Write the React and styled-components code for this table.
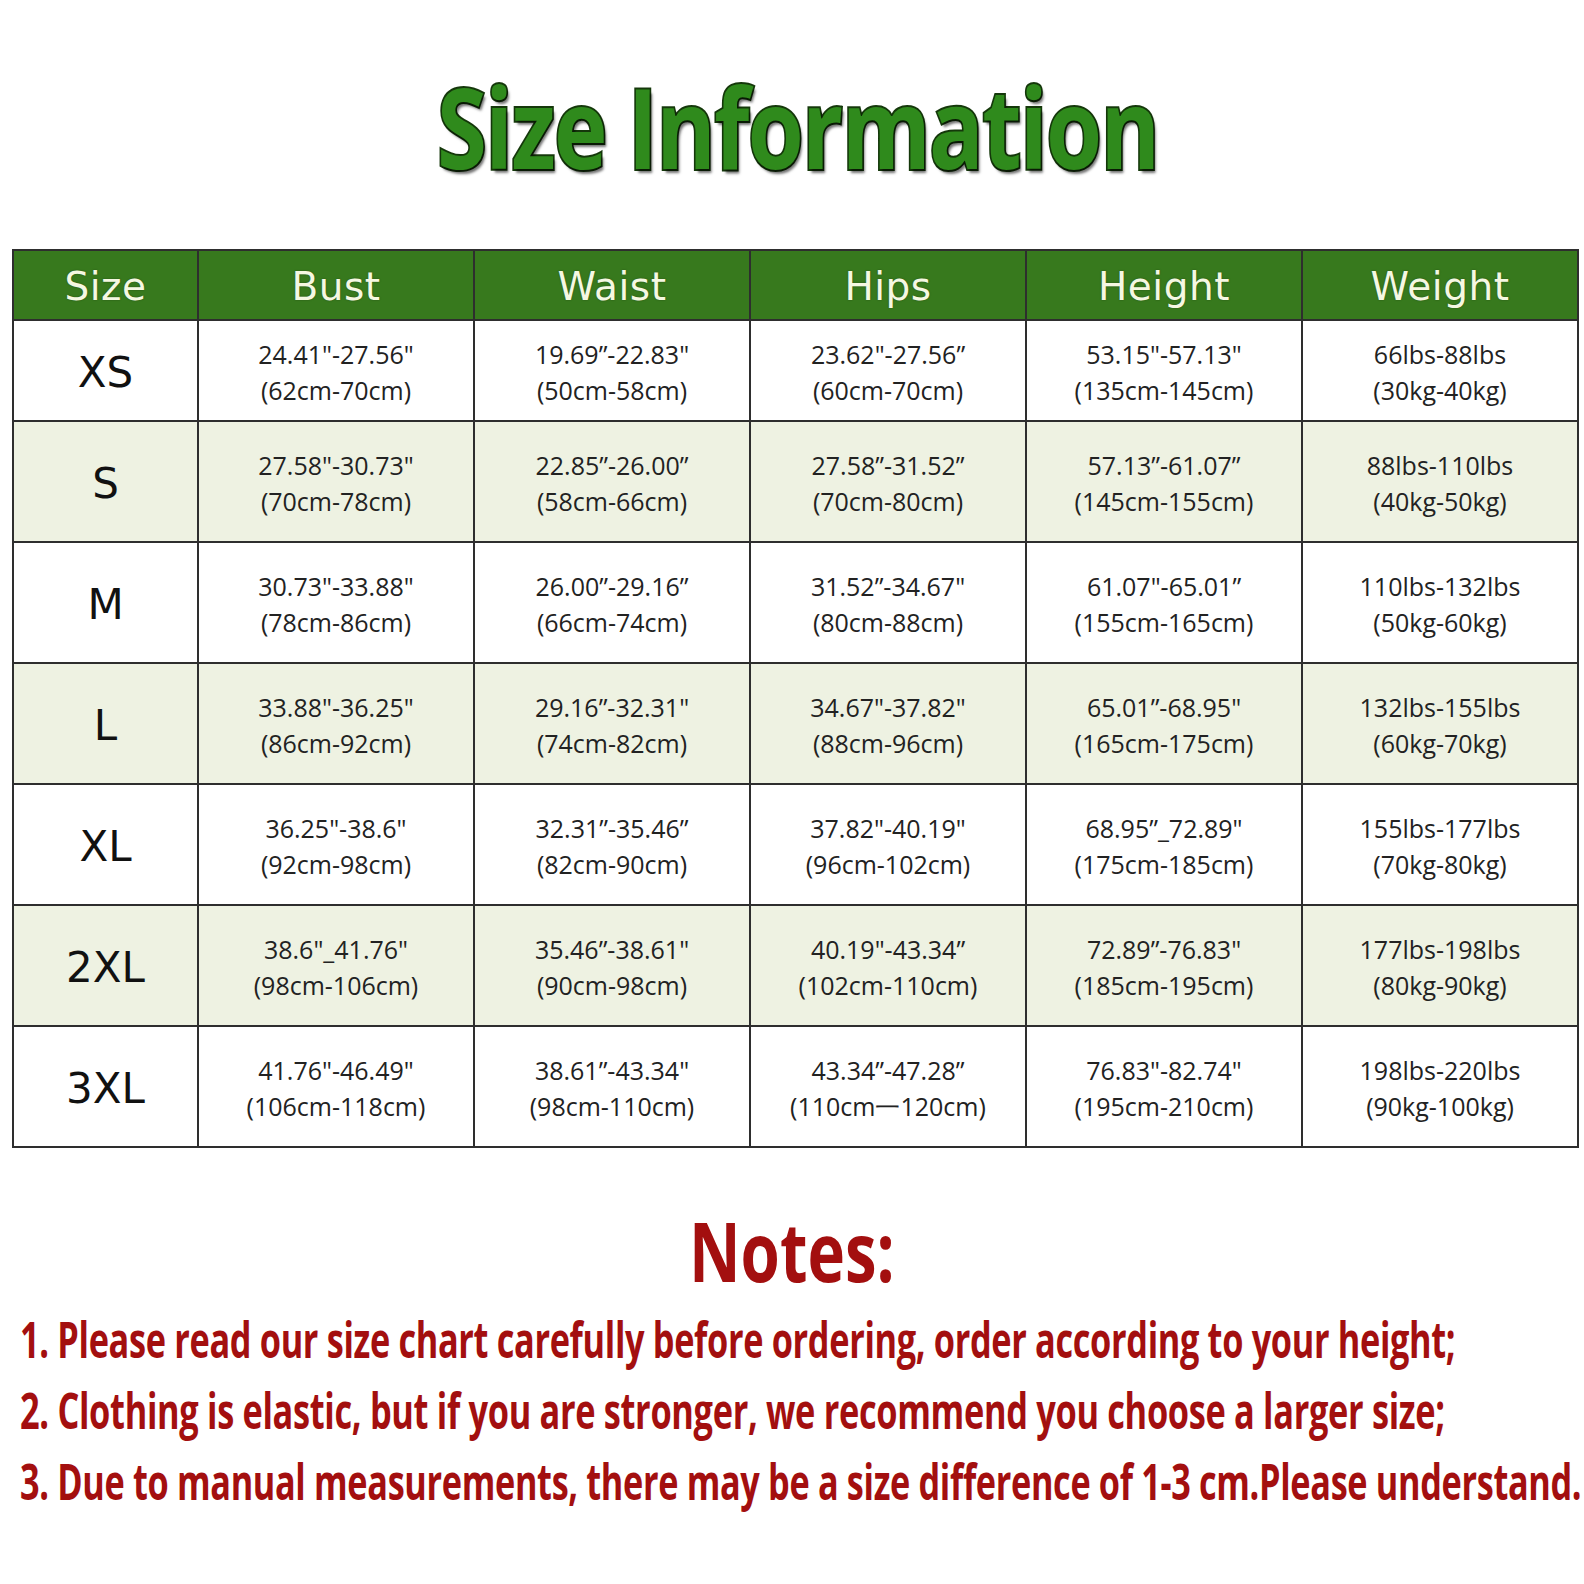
import React, { useLayoutEffect, useRef, useState } from "react";
import styled, { createGlobalStyle } from "styled-components";

const GlobalStyle = createGlobalStyle`
  html, body {
    margin: 0;
    padding: 0;
    background: #ffffff;
    overflow: hidden;
  }
`;

const Page = styled.div`
  width: 100%;
  height: 100vh;
  background: #ffffff;
  display: flex;
  flex-direction: column;
  overflow: hidden;
`;

const Title = styled.h1`
  margin: 66px 0 0 0;
  padding-left: 11px;
  height: 130px;
  text-align: center;
  font-family: "Open Sans", sans-serif;
  font-weight: 700;
  font-size: 112px;
  line-height: 120px;
  letter-spacing: -2px;
  color: #2f8a1c;
  -webkit-text-stroke: 4px #15380b;
  paint-order: stroke fill;
  text-shadow: 3px 4px 3px rgba(0, 0, 0, 0.55);
`;

const Squeeze = styled.span`
  display: inline-block;
  white-space: nowrap;
  transform-origin: ${(p) => p.$origin || "center"};
`;

const Grid = styled.div`
  margin: 53px 0 0 12px;
  width: 1567px;
  box-sizing: border-box;
  display: grid;
  grid-template-columns: 183px repeat(5, 274px);
  grid-template-rows: 68px 99px repeat(6, 119px);
  gap: 2px;
  padding: 2px;
  background: #2e2e2e;
  font-family: "Open Sans", "DejaVu Sans", sans-serif;
`;

const HeadCell = styled.div`
  background: #37791d;
  display: flex;
  align-items: center;
  justify-content: center;
  color: #f5f8e2;
  font-family: "DejaVu Sans", sans-serif;
  font-size: 39px;
  letter-spacing: 0.5px;
  text-shadow: 0 0 2px rgba(0, 0, 0, 0.35);
  padding-top: 2px;
`;

const SizeCell = styled.div`
  background: ${(p) => (p.$alt ? "#eef2e2" : "#ffffff")};
  display: flex;
  align-items: center;
  justify-content: center;
  font-family: "DejaVu Sans", sans-serif;
  font-size: 42px;
  color: #111111;
  padding-top: 4px;
`;

const DataCell = styled.div`
  background: ${(p) => (p.$alt ? "#eef2e2" : "#ffffff")};
  display: flex;
  flex-direction: column;
  align-items: center;
  justify-content: center;
  font-size: 25px;
  line-height: 36px;
  color: #222222;
  padding-top: 2px;
`;

const Line = styled.div`
  white-space: nowrap;
`;

const NotesTitle = styled.h2`
  margin: 57px 0 0 0;
  text-align: center;
  font-family: "Open Sans", sans-serif;
  font-weight: 700;
  font-size: 82px;
  line-height: 90px;
  color: #a30f0f;
`;

const NotesList = styled.div`
  margin-top: 8px;
  padding-left: 20px;
  display: flex;
  flex-direction: column;
`;

const Note = styled.div`
  font-family: "Open Sans", sans-serif;
  font-weight: 700;
  font-size: 51px;
  line-height: 71px;
  letter-spacing: -0.5px;
  color: #a30f0f;
  white-space: nowrap;
`;

// squeezes a line horizontally so it takes the width it has in the picture
function Fit({ width, origin, children }) {
  const ref = useRef(null);
  const [scale, setScale] = useState(1);
  useLayoutEffect(() => {
    if (ref.current) {
      const w = ref.current.offsetWidth;
      if (w > 0) setScale(width / w);
    }
  }, [width, children]);
  return (
    <Squeeze ref={ref} $origin={origin} style={{ transform: `scaleX(${scale})` }}>
      {children}
    </Squeeze>
  );
}

const columns = ["Size", "Bust", "Waist", "Hips", "Height", "Weight"];

const rows = [
  {
    size: "XS",
    cells: [
      ["24.41\"-27.56\"", "(62cm-70cm)"],
      ["19.69”-22.83\"", "(50cm-58cm)"],
      ["23.62\"-27.56”", "(60cm-70cm)"],
      ["53.15\"-57.13\"", "(135cm-145cm)"],
      ["66lbs-88lbs", "(30kg-40kg)"],
    ],
  },
  {
    size: "S",
    cells: [
      ["27.58\"-30.73\"", "(70cm-78cm)"],
      ["22.85”-26.00”", "(58cm-66cm)"],
      ["27.58”-31.52”", "(70cm-80cm)"],
      ["57.13”-61.07”", "(145cm-155cm)"],
      ["88lbs-110lbs", "(40kg-50kg)"],
    ],
  },
  {
    size: "M",
    cells: [
      ["30.73\"-33.88\"", "(78cm-86cm)"],
      ["26.00”-29.16”", "(66cm-74cm)"],
      ["31.52”-34.67\"", "(80cm-88cm)"],
      ["61.07\"-65.01”", "(155cm-165cm)"],
      ["110lbs-132lbs", "(50kg-60kg)"],
    ],
  },
  {
    size: "L",
    cells: [
      ["33.88\"-36.25\"", "(86cm-92cm)"],
      ["29.16”-32.31\"", "(74cm-82cm)"],
      ["34.67\"-37.82\"", "(88cm-96cm)"],
      ["65.01”-68.95\"", "(165cm-175cm)"],
      ["132lbs-155lbs", "(60kg-70kg)"],
    ],
  },
  {
    size: "XL",
    cells: [
      ["36.25\"-38.6\"", "(92cm-98cm)"],
      ["32.31”-35.46”", "(82cm-90cm)"],
      ["37.82\"-40.19\"", "(96cm-102cm)"],
      ["68.95”_72.89\"", "(175cm-185cm)"],
      ["155lbs-177lbs", "(70kg-80kg)"],
    ],
  },
  {
    size: "2XL",
    cells: [
      ["38.6\"_41.76\"", "(98cm-106cm)"],
      ["35.46”-38.61\"", "(90cm-98cm)"],
      ["40.19\"-43.34”", "(102cm-110cm)"],
      ["72.89”-76.83\"", "(185cm-195cm)"],
      ["177lbs-198lbs", "(80kg-90kg)"],
    ],
  },
  {
    size: "3XL",
    cells: [
      ["41.76\"-46.49\"", "(106cm-118cm)"],
      ["38.61”-43.34\"", "(98cm-110cm)"],
      ["43.34”-47.28”", "(110cm一120cm)"],
      ["76.83\"-82.74\"", "(195cm-210cm)"],
      ["198lbs-220lbs", "(90kg-100kg)"],
    ],
  },
];

const notes = [
  { text: "1. Please read our size chart carefully before ordering, order according to your height;", w: 1435 },
  { text: "2. Clothing is elastic, but if you are stronger, we recommend you choose a larger size;", w: 1425 },
  { text: "3. Due to manual measurements, there may be a size difference of 1-3 cm.Please understand.", w: 1561 },
];

export default function App() {
  return (
    <>
      <GlobalStyle />
      <Page>
        <Title>
          <Fit width={721}>Size Information</Fit>
        </Title>
        <Grid>
          {columns.map((c) => (
            <HeadCell key={c}>{c}</HeadCell>
          ))}
          {rows.map((r, i) => (
            <React.Fragment key={r.size}>
              <SizeCell $alt={i % 2 === 1}>{r.size}</SizeCell>
              {r.cells.map((c, j) => (
                <DataCell key={j} $alt={i % 2 === 1}>
                  <Line>{c[0]}</Line>
                  <Line>{c[1]}</Line>
                </DataCell>
              ))}
            </React.Fragment>
          ))}
        </Grid>
        <NotesTitle>
          <Fit width={206}>Notes:</Fit>
        </NotesTitle>
        <NotesList>
          {notes.map((n) => (
            <Note key={n.text}>
              <Fit width={n.w} origin="left">
                {n.text}
              </Fit>
            </Note>
          ))}
        </NotesList>
      </Page>
    </>
  );
}
